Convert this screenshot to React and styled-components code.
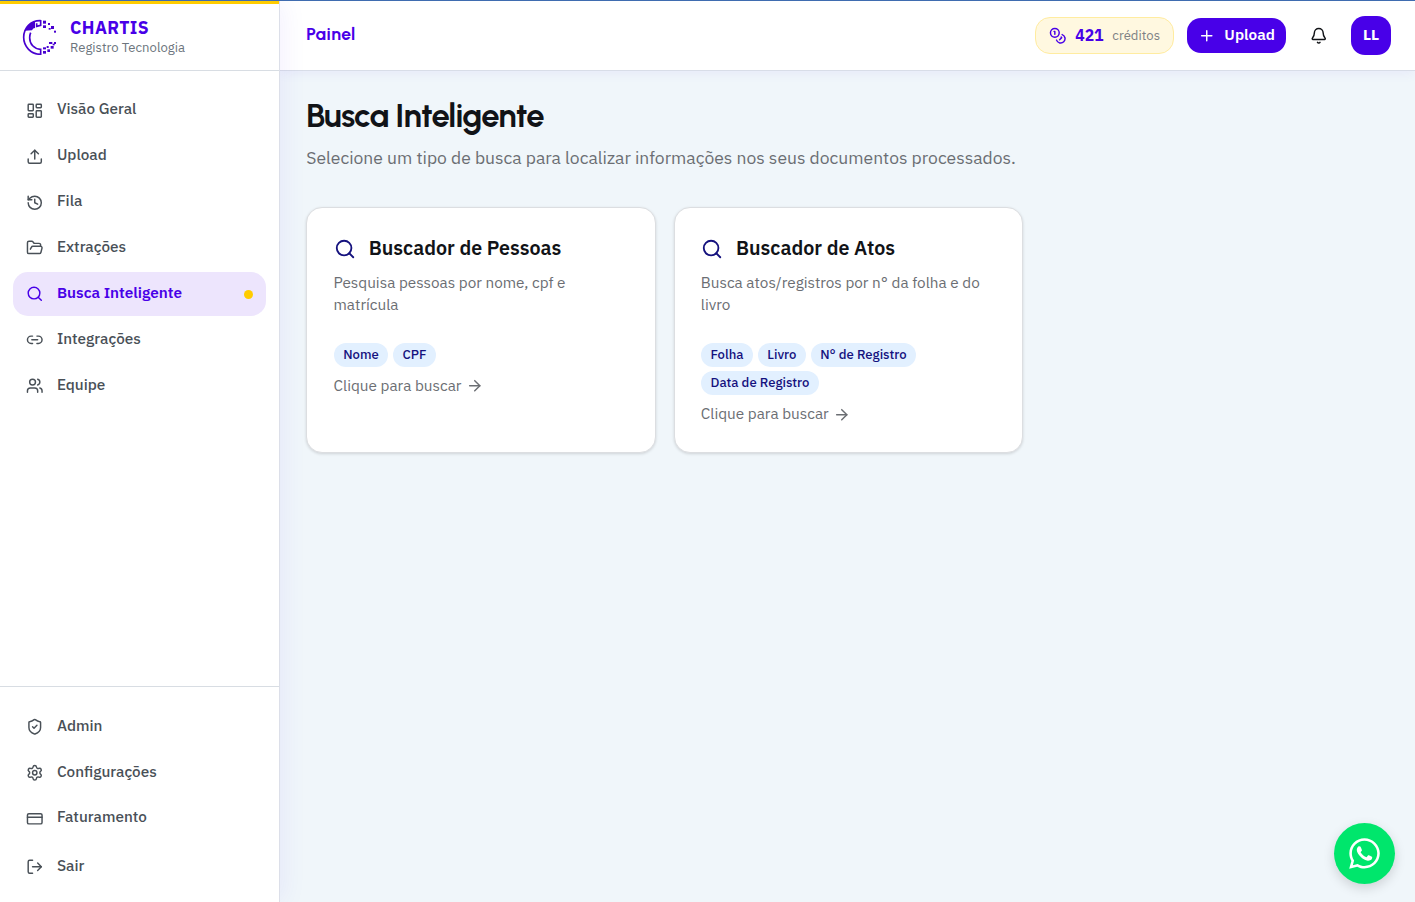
import React from "react";
import styled, { createGlobalStyle } from "styled-components";
import {
  LayoutDashboard, Upload, History, FolderOpen, Search, Link2, Users,
  ShieldCheck, Settings, CreditCard, LogOut, Plus, Bell, ArrowRight,
} from "lucide-react";
import { FaWhatsapp } from "react-icons/fa";

const Global = createGlobalStyle`
  * { box-sizing: border-box; }
  html { font-size: 17.5px; }
  body {
    margin: 0;
    background: #f0f6fa;
    color: #111317;
    font-family: "IBM Plex Sans", Roboto, "Noto Sans", sans-serif;
  }
  h1, h2, p { margin: 0; }
  button { font: inherit; border: 0; padding: 0; cursor: pointer; }
  svg { flex: none; display: block; }
`;

const Shell = styled.div`
  display: flex;
  height: 902px;
  border-top: 1px solid #3f6cb0;
  overflow: hidden;
`;

const Sidebar = styled.aside`
  position: relative;
  z-index: 2;
  width: 280px;
  display: flex;
  flex-direction: column;
  background: #fff;
  border-right: 1px solid #dcdfe9;
  box-shadow: 4px 0 24px rgba(72, 0, 232, 0.06);
`;

const Brand = styled.div`
  height: 70px;
  display: flex;
  align-items: center;
  gap: 13px;
  padding: 0 0 0 22px;
  border-top: 3px solid #ffcc00;
  border-bottom: 1px solid #d8dde3;
`;

const BrandText = styled.div`
  display: flex;
  flex-direction: column;
`;

const BrandName = styled.span`
  padding-bottom: 2px;
  font-size: 1rem;
  line-height: 19px;
  font-weight: 700;
  letter-spacing: 0.025em;
  color: #4800e8;
`;

const BrandSub = styled.span`
  font-size: 0.75rem;
  line-height: 18px;
  color: #6c757d;
`;

const Nav = styled.nav`
  display: flex;
  flex-direction: column;
  gap: 0.125rem;
  padding: 1rem 0.75rem 0.75rem;
`;

const MainNav = styled(Nav)`
  flex: 1;
`;

const FooterNav = styled(Nav)`
  border-top: 1px solid #d8dde3;
`;

const NavItem = styled.a`
  height: 2.5rem;
  display: flex;
  align-items: center;
  gap: 0.75rem;
  padding: 0 0.75rem;
  border-radius: 15px;
  color: ${(p) => (p.$active ? "#4800e8" : "#495057")};
  background: ${(p) => (p.$active ? "#ede5fd" : "transparent")};
  font-size: 0.875rem;
  font-weight: ${(p) => (p.$active ? 600 : 500)};
  margin-top: ${(p) => (p.$spaced ? "2.6px" : "0")};
`;

const NavLabel = styled.span`
  flex: 1;
  line-height: 20px;
  padding-bottom: 4px;
`;

const Dot = styled.i`
  width: 9px;
  height: 9px;
  margin-top: 1px;
  border-radius: 50%;
  background: #ffcc00;
`;

const Content = styled.div`
  flex: 1;
  display: flex;
  flex-direction: column;
`;

const Header = styled.header`
  height: 70px;
  display: flex;
  align-items: center;
  justify-content: space-between;
  padding: 0 24px 0 1.5rem;
  background: #fff;
  border-bottom: 1px solid #d8dde8;
  box-shadow: 0 2px 12px rgba(72, 0, 232, 0.06);
`;

const Crumb = styled.span`
  font-family: Urbanist, Lato, sans-serif;
  font-size: 1rem;
  line-height: 22px;
  font-weight: 700;
  letter-spacing: 0.025em;
  padding-bottom: 3px;
  color: #4800e8;
`;

const Actions = styled.div`
  display: flex;
  align-items: center;
`;

const Credits = styled.div`
  height: 37px;
  width: 139px;
  display: flex;
  align-items: center;
  justify-content: center;
  border: 1px solid #ffeca0;
  border-radius: 15px;
  background: #fff8e0;
  color: #4800e8;
`;

const CreditCount = styled.b`
  margin: 0 0.5rem;
  padding-bottom: 2px;
  font-size: 15.75px;
  line-height: 20px;
  font-weight: 700;
`;

const CreditLabel = styled.span`
  font-size: 0.75rem;
  line-height: 18px;
  color: #7d8184;
`;

const UploadButton = styled.button`
  width: 99px;
  height: 35px;
  margin-left: 13px;
  display: flex;
  align-items: center;
  justify-content: center;
  gap: 0.5rem;
  border-radius: 14px;
  background: #4800e8;
  color: #fff;
  font-size: 0.875rem;
  line-height: 20px;
  font-weight: 600;
`;

const UploadLabel = styled.span`
  padding-bottom: 3px;
`;

const BellButton = styled.button`
  width: 36px;
  height: 36px;
  margin: 0 14px 0 15px;
  display: grid;
  place-items: center;
  background: transparent;
  color: #111317;
`;

const Avatar = styled.div`
  width: 40px;
  height: 39px;
  padding-bottom: 3px;
  display: grid;
  place-items: center;
  border-radius: 14px;
  background: #4800e8;
  color: #fff;
  font-size: 0.875rem;
  line-height: 20px;
  font-weight: 700;
`;

const Main = styled.main`
  flex: 1;
  padding: 25px 24.5px 0 1.5rem;
`;

const Title = styled.h1`
  font-family: Urbanist, Lato, sans-serif;
  font-size: 1.875rem;
  line-height: 40px;
  font-weight: 700;
  letter-spacing: -0.025em;
`;

const Lead = styled.p`
  margin-top: 9px;
  font-size: 1rem;
  line-height: 26px;
  color: #6b6e73;
`;

const Cards = styled.div`
  display: grid;
  grid-template-columns: repeat(3, 1fr);
  gap: 1rem;
  margin-top: 36px;
`;

const Card = styled.article`
  height: 246px;
  padding: 1.5rem;
  background: #fff;
  border: 1px solid #dcdee1;
  border-radius: 16px;
  box-shadow: 0 1px 3px rgba(0, 0, 0, 0.14);
`;

const CardHead = styled.div`
  display: flex;
  align-items: center;
  gap: 0.75rem;
  height: 29px;
  color: #15127e;
`;

const CardTitle = styled.h2`
  color: #111317;
  padding-bottom: 2px;
  font-size: 1.125rem;
  line-height: 27px;
  font-weight: 600;
`;

const CardText = styled.p`
  margin-top: 8.5px;
  font-size: 0.875rem;
  line-height: 1.25rem;
  color: #6b6e73;
`;

const Tags = styled.div`
  display: flex;
  flex-wrap: wrap;
  gap: 0.25rem;
  margin-top: 27.25px;
`;

const Tag = styled.span`
  height: 24px;
  padding: 0 9.7px;
  border-radius: 12px;
  background: #e2f0ff;
  color: #15127e;
  font-size: 0.75rem;
  line-height: 23.4px;
  font-weight: 500;
`;

const CardLink = styled.a`
  display: flex;
  align-items: center;
  gap: 0.25rem;
  margin-top: 8.25px;
  font-size: 0.875rem;
  line-height: 20px;
  color: #6b6e73;
`;

const LinkLabel = styled.span`
  padding-bottom: 2px;
`;

const Chat = styled.button`
  position: fixed;
  z-index: 5;
  right: 20px;
  bottom: 18px;
  width: 61px;
  height: 61px;
  padding: 0 1px 1px 0;
  display: grid;
  place-items: center;
  border-radius: 50%;
  background: #00e66c;
  color: #fff;
  box-shadow: 0 4px 12px rgba(0, 0, 0, 0.15);
`;

const DOTS = [
  [129, 62, 9, 9], [129, 76, 9, 8], [144, 69, 6, 6], [153, 78, 9, 9],
  [146, 84, 6, 5], [162, 92, 6, 6], [147, 126, 10, 6], [162, 126, 6, 6],
  [158, 131, 6, 5], [152, 138, 9, 8], [140, 138, 6, 6], [129, 142, 9, 6],
  [142, 148, 8, 8], [129, 153, 9, 8],
];

const Logo = () => (
  <svg width="35" height="36.67" viewBox="66 57 105 110" fill="#4800d0">
    <path d="M122 62C92 61 71 84 71 112S93 163 122 163V148C102 147 89 132 89 113Q89 105 92 98" fill="none" stroke="#4800d0" strokeWidth="5" />
    <path d="M122 60V76L110 79V70" fill="none" stroke="#4800d0" strokeWidth="5" />
    <path d="M75 92Q84 70 105 64V84Q99 84 96 91Z" />
    {DOTS.map(([x, y, w, h]) => <rect key={`${x}-${y}`} x={x} y={y} width={w} height={h} />)}
  </svg>
);

const CoinsIcon = () => (
  <svg width="17.5" height="17.5" viewBox="0 0 24 24" fill="none" stroke="currentColor" strokeWidth="2" strokeLinecap="round" strokeLinejoin="round">
    <circle cx="8" cy="8" r="6" />
    <path d="M18.09 10.37A6 6 0 1 1 10.34 18" />
    <path d="M7 6h1v4" />
    <path d="m16.71 13.88.7.71-2.82 2.82" />
  </svg>
);

const PRIMARY = [
  { label: "Visão Geral", icon: LayoutDashboard },
  { label: "Upload", icon: Upload },
  { label: "Fila", icon: History },
  { label: "Extrações", icon: FolderOpen },
  { label: "Busca Inteligente", icon: Search, active: true },
  { label: "Integrações", icon: Link2 },
  { label: "Equipe", icon: Users },
];

const SECONDARY = [
  { label: "Admin", icon: ShieldCheck },
  { label: "Configurações", icon: Settings },
  { label: "Faturamento", icon: CreditCard },
  { label: "Sair", icon: LogOut, spaced: true },
];

const CARDS = [
  {
    title: "Buscador de Pessoas",
    text: "Pesquisa pessoas por nome, cpf e matrícula",
    tags: ["Nome", "CPF"],
  },
  {
    title: "Buscador de Atos",
    text: "Busca atos/registros por n° da folha e do livro",
    tags: ["Folha", "Livro", "N° de Registro", "Data de Registro"],
  },
];

const NavList = ({ items }) =>
  items.map(({ label, icon: Icon, active, spaced }) => (
    <NavItem key={label} $active={active} $spaced={spaced}>
      <Icon size={17.5} strokeWidth={2} />
      <NavLabel>{label}</NavLabel>
      {active && <Dot />}
    </NavItem>
  ));

export default function App() {
  return (
    <>
      <Global />
      <Shell>
        <Sidebar>
          <Brand>
            <Logo />
            <BrandText>
              <BrandName>CHARTIS</BrandName>
              <BrandSub>Registro Tecnologia</BrandSub>
            </BrandText>
          </Brand>
          <MainNav><NavList items={PRIMARY} /></MainNav>
          <FooterNav><NavList items={SECONDARY} /></FooterNav>
        </Sidebar>
        <Content>
          <Header>
            <Crumb>Painel</Crumb>
            <Actions>
              <Credits>
                <CoinsIcon />
                <CreditCount>421</CreditCount>
                <CreditLabel>créditos</CreditLabel>
              </Credits>
              <UploadButton><Plus size={17.5} strokeWidth={2} /><UploadLabel>Upload</UploadLabel></UploadButton>
              <BellButton><Bell size={17.5} strokeWidth={2} /></BellButton>
              <Avatar>LL</Avatar>
            </Actions>
          </Header>
          <Main>
            <Title>Busca Inteligente</Title>
            <Lead>Selecione um tipo de busca para localizar informações nos seus documentos processados.</Lead>
            <Cards>
              {CARDS.map(({ title, text, tags }) => (
                <Card key={title}>
                  <CardHead>
                    <Search size={22} strokeWidth={2} />
                    <CardTitle>{title}</CardTitle>
                  </CardHead>
                  <CardText>{text}</CardText>
                  <Tags>{tags.map((t) => <Tag key={t}>{t}</Tag>)}</Tags>
                  <CardLink><LinkLabel>Clique para buscar</LinkLabel> <ArrowRight size={17.5} strokeWidth={2} /></CardLink>
                </Card>
              ))}
            </Cards>
          </Main>
        </Content>
      </Shell>
      <Chat><FaWhatsapp size={35} /></Chat>
    </>
  );
}
